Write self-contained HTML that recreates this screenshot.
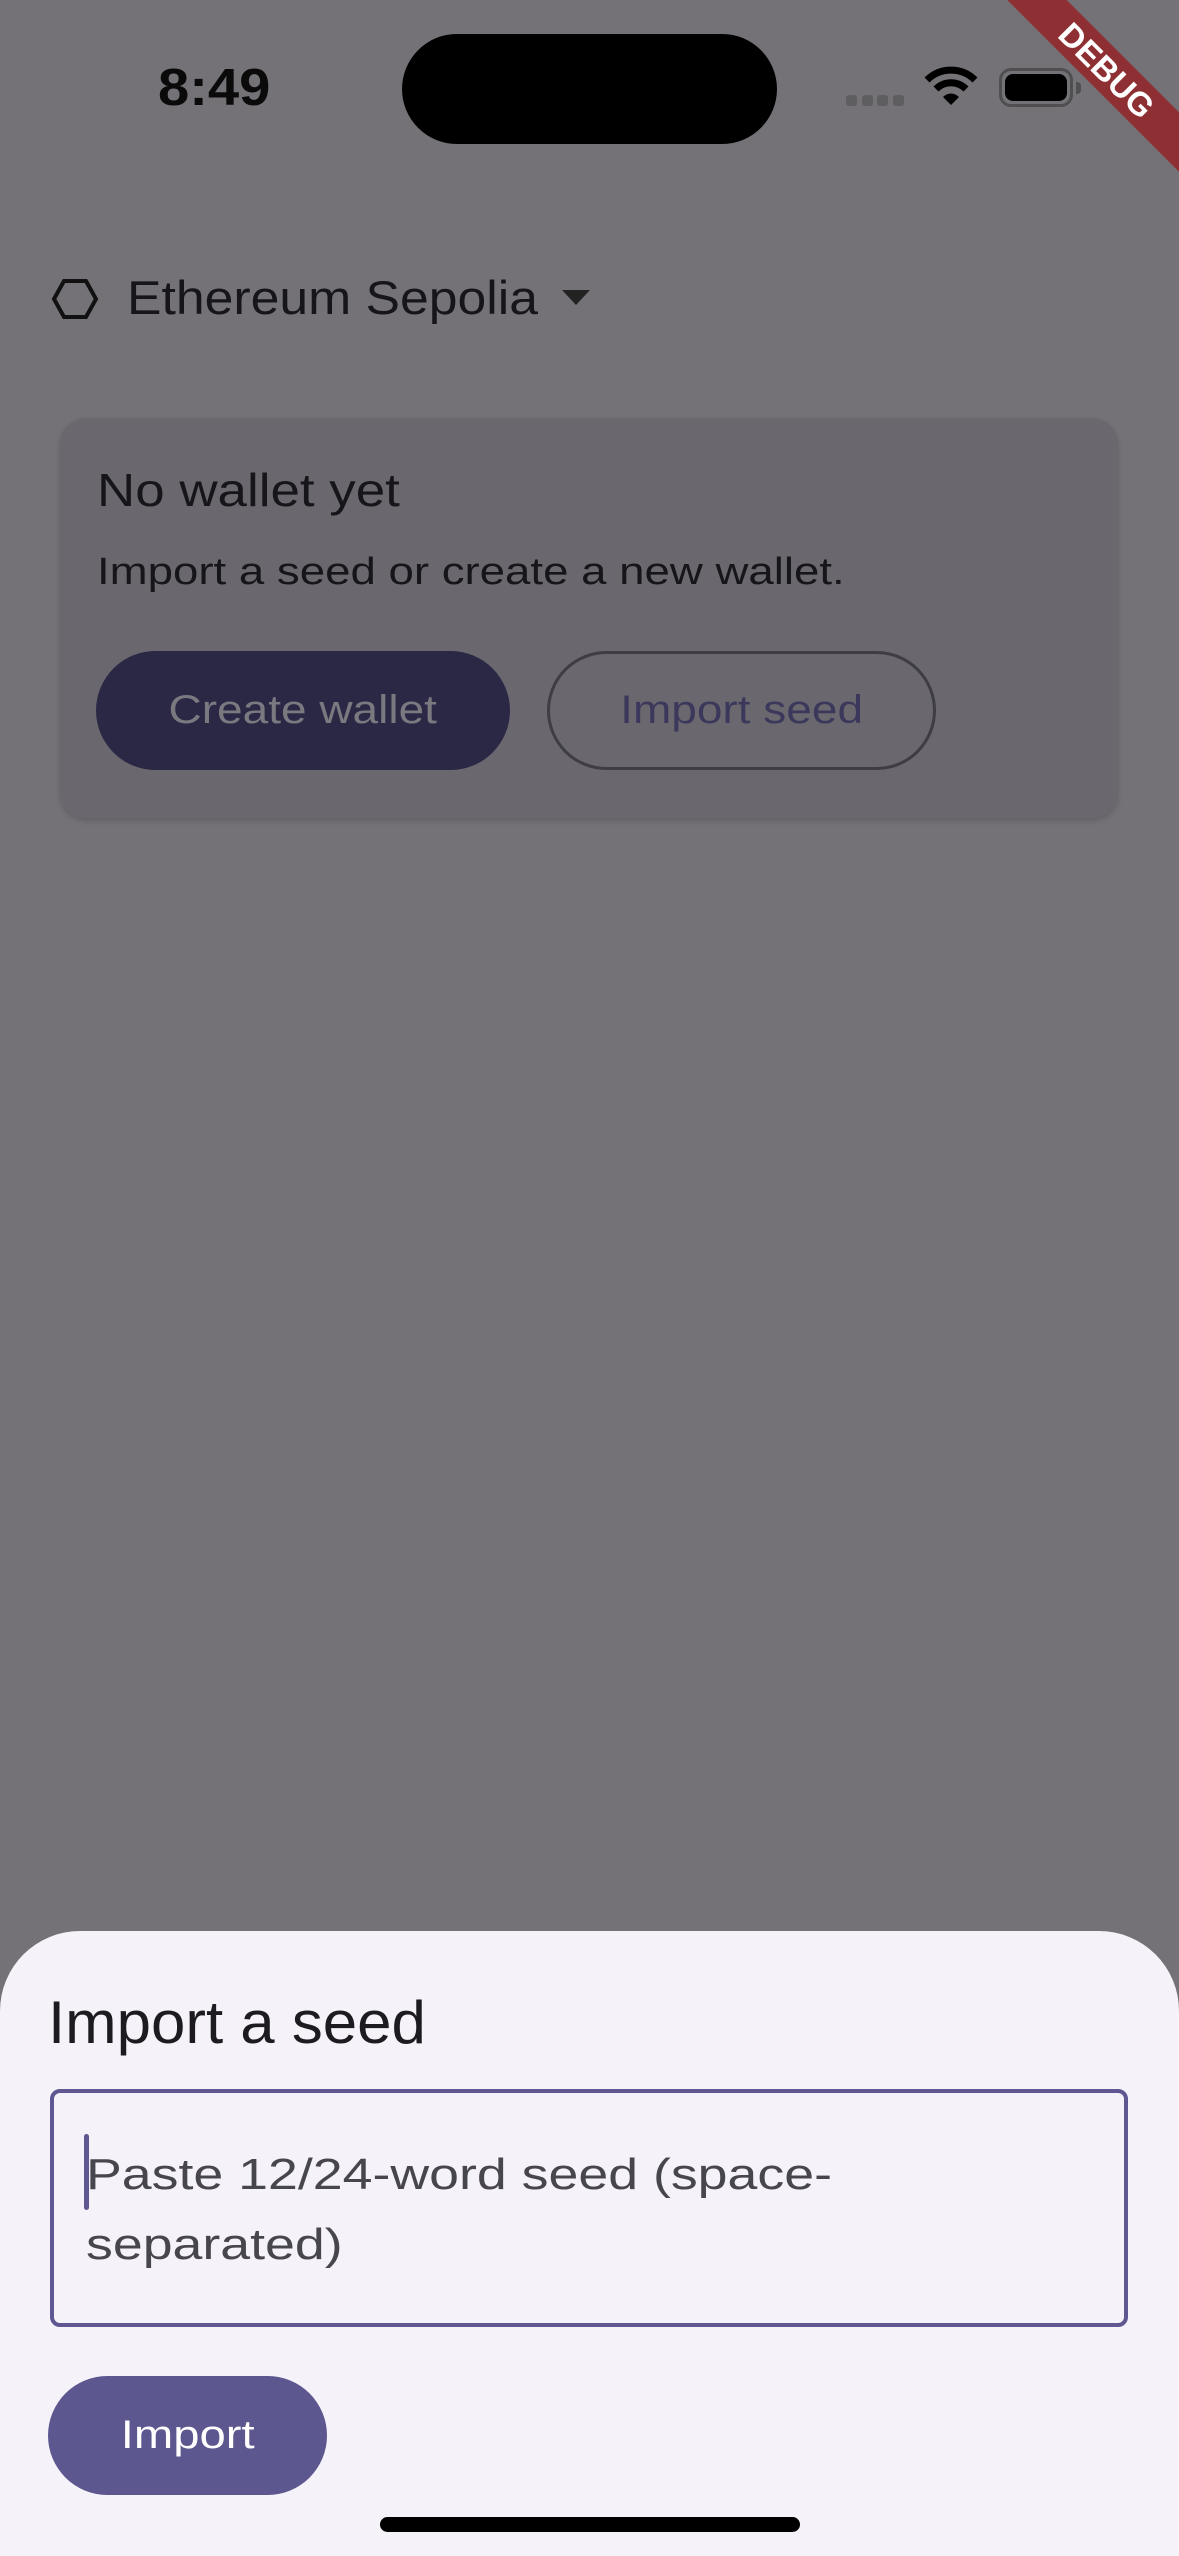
<!DOCTYPE html>
<html><head><meta charset="utf-8"><style>
*{margin:0;padding:0;box-sizing:border-box}
html,body{width:1179px;height:2556px;overflow:hidden;background:#747276;font-family:"Liberation Sans",sans-serif}
.abs{position:absolute}
.sx{transform-origin:0 50%;white-space:nowrap}
</style></head><body>
<div class="abs" style="left:0;top:0;width:1179px;height:2556px;background:#747276"></div>
<div class="abs sx" style="left:158px;top:58px;font-size:52px;font-weight:bold;color:#0a0a0a;line-height:60px;transform:scaleX(1.08)">8:49</div>
<div class="abs" style="left:402px;top:34px;width:375px;height:110px;border-radius:55px;background:#000"></div>
<div class="abs" style="left:846px;top:95px;width:11px;height:11px;border-radius:3px;background:#5e5d60"></div>
<div class="abs" style="left:862px;top:95px;width:11px;height:11px;border-radius:3px;background:#5e5d60"></div>
<div class="abs" style="left:877px;top:95px;width:11px;height:11px;border-radius:3px;background:#5e5d60"></div>
<div class="abs" style="left:893px;top:95px;width:11px;height:11px;border-radius:3px;background:#5e5d60"></div>
<svg class="abs" style="left:924px;top:66px" width="54" height="42" viewBox="0 0 54 42">
<path d="M3 14 A34 34 0 0 1 51 14" stroke="#000" stroke-width="7" fill="none"/>
<path d="M12 23 A21 21 0 0 1 42 23" stroke="#000" stroke-width="7" fill="none"/>
<path d="M19 31 L27 39 L35 31 A11 11 0 0 0 19 31Z" fill="#000"/>
</svg>
<div class="abs" style="left:999px;top:68px;width:74px;height:39px;border:3px solid #4f4e51;border-radius:12px"></div>
<div class="abs" style="left:1005px;top:74px;width:62px;height:27px;border-radius:8px;background:#000"></div>
<div class="abs" style="left:1076px;top:82px;width:5px;height:12px;border-radius:0 4px 4px 0;background:#4f4e51"></div>
<svg class="abs" style="left:0;top:0" width="1179" height="220">
<g transform="translate(1107,70) rotate(45)">
<rect x="-250" y="-21" width="500" height="42" fill="#8e3033"/>
<text x="0" y="12" text-anchor="middle" font-family="Liberation Sans" font-weight="bold" font-size="33" fill="#fff">DEBUG</text>
</g></svg>
<svg class="abs" style="left:50px;top:278px" width="50" height="42" viewBox="0 0 50 42">
<path d="M14 3 H36 L46 21 L36 39 H14 L4 21 Z" stroke="#111" stroke-width="4" fill="none"/>
</svg>
<div class="abs sx" style="left:127px;top:270px;font-size:47px;color:#161519;line-height:56px;transform:scaleX(1.1)">Ethereum Sepolia</div>
<svg class="abs" style="left:560px;top:288px" width="32" height="20"><path d="M2 2 H30 L16 17Z" fill="#222"/></svg>
<div class="abs" style="left:60px;top:418px;width:1058px;height:400px;border-radius:26px;background:#6a686e;box-shadow:0 3px 6px rgba(0,0,0,.15)"></div>
<div class="abs sx" style="left:97px;top:462px;font-size:46px;color:#161519;line-height:56px;transform:scaleX(1.15)">No wallet yet</div>
<div class="abs sx" style="left:97px;top:547px;font-size:38px;color:#161519;line-height:50px;transform:scaleX(1.2)">Import a seed or create a new wallet.</div>
<div class="abs" style="left:96px;top:651px;width:414px;height:119px;border-radius:60px;background:#2b2846;color:#7b7980;font-size:40px;text-align:center;line-height:119px"><span style="display:inline-block;transform:scaleX(1.15)">Create wallet</span></div>
<div class="abs" style="left:547px;top:651px;width:389px;height:119px;border-radius:60px;border:3px solid #3f3d44;color:#3c385c;font-size:40px;text-align:center;line-height:113px"><span style="display:inline-block;transform:scaleX(1.15)">Import seed</span></div>
<div class="abs" style="left:0;top:1931px;width:1179px;height:625px;border-radius:80px 80px 0 0;background:#f5f2f9"></div>
<div class="abs sx" style="left:48px;top:1988px;font-size:60px;color:#1c1b1f;line-height:70px;transform:scaleX(1.03)">Import a seed</div>
<div class="abs" style="left:50px;top:2089px;width:1078px;height:238px;border:4px solid #5e5791;border-radius:10px"></div>
<div class="abs" style="left:84px;top:2134px;width:5px;height:76px;border-radius:3px;background:#5e5791"></div>
<div class="abs sx" style="left:86px;top:2140px;font-size:44px;color:#47454e;line-height:70px;transform:scaleX(1.22);transform-origin:0 0">Paste 12/24-word seed (space-<br>separated)</div>
<div class="abs" style="left:48px;top:2376px;width:279px;height:119px;border-radius:60px;background:#5d5790;color:#fff;font-size:40px;text-align:center;line-height:119px"><span style="display:inline-block;transform:scaleX(1.18)">Import</span></div>
<div class="abs" style="left:380px;top:2517px;width:420px;height:15px;border-radius:8px;background:#000"></div>
</body></html>
